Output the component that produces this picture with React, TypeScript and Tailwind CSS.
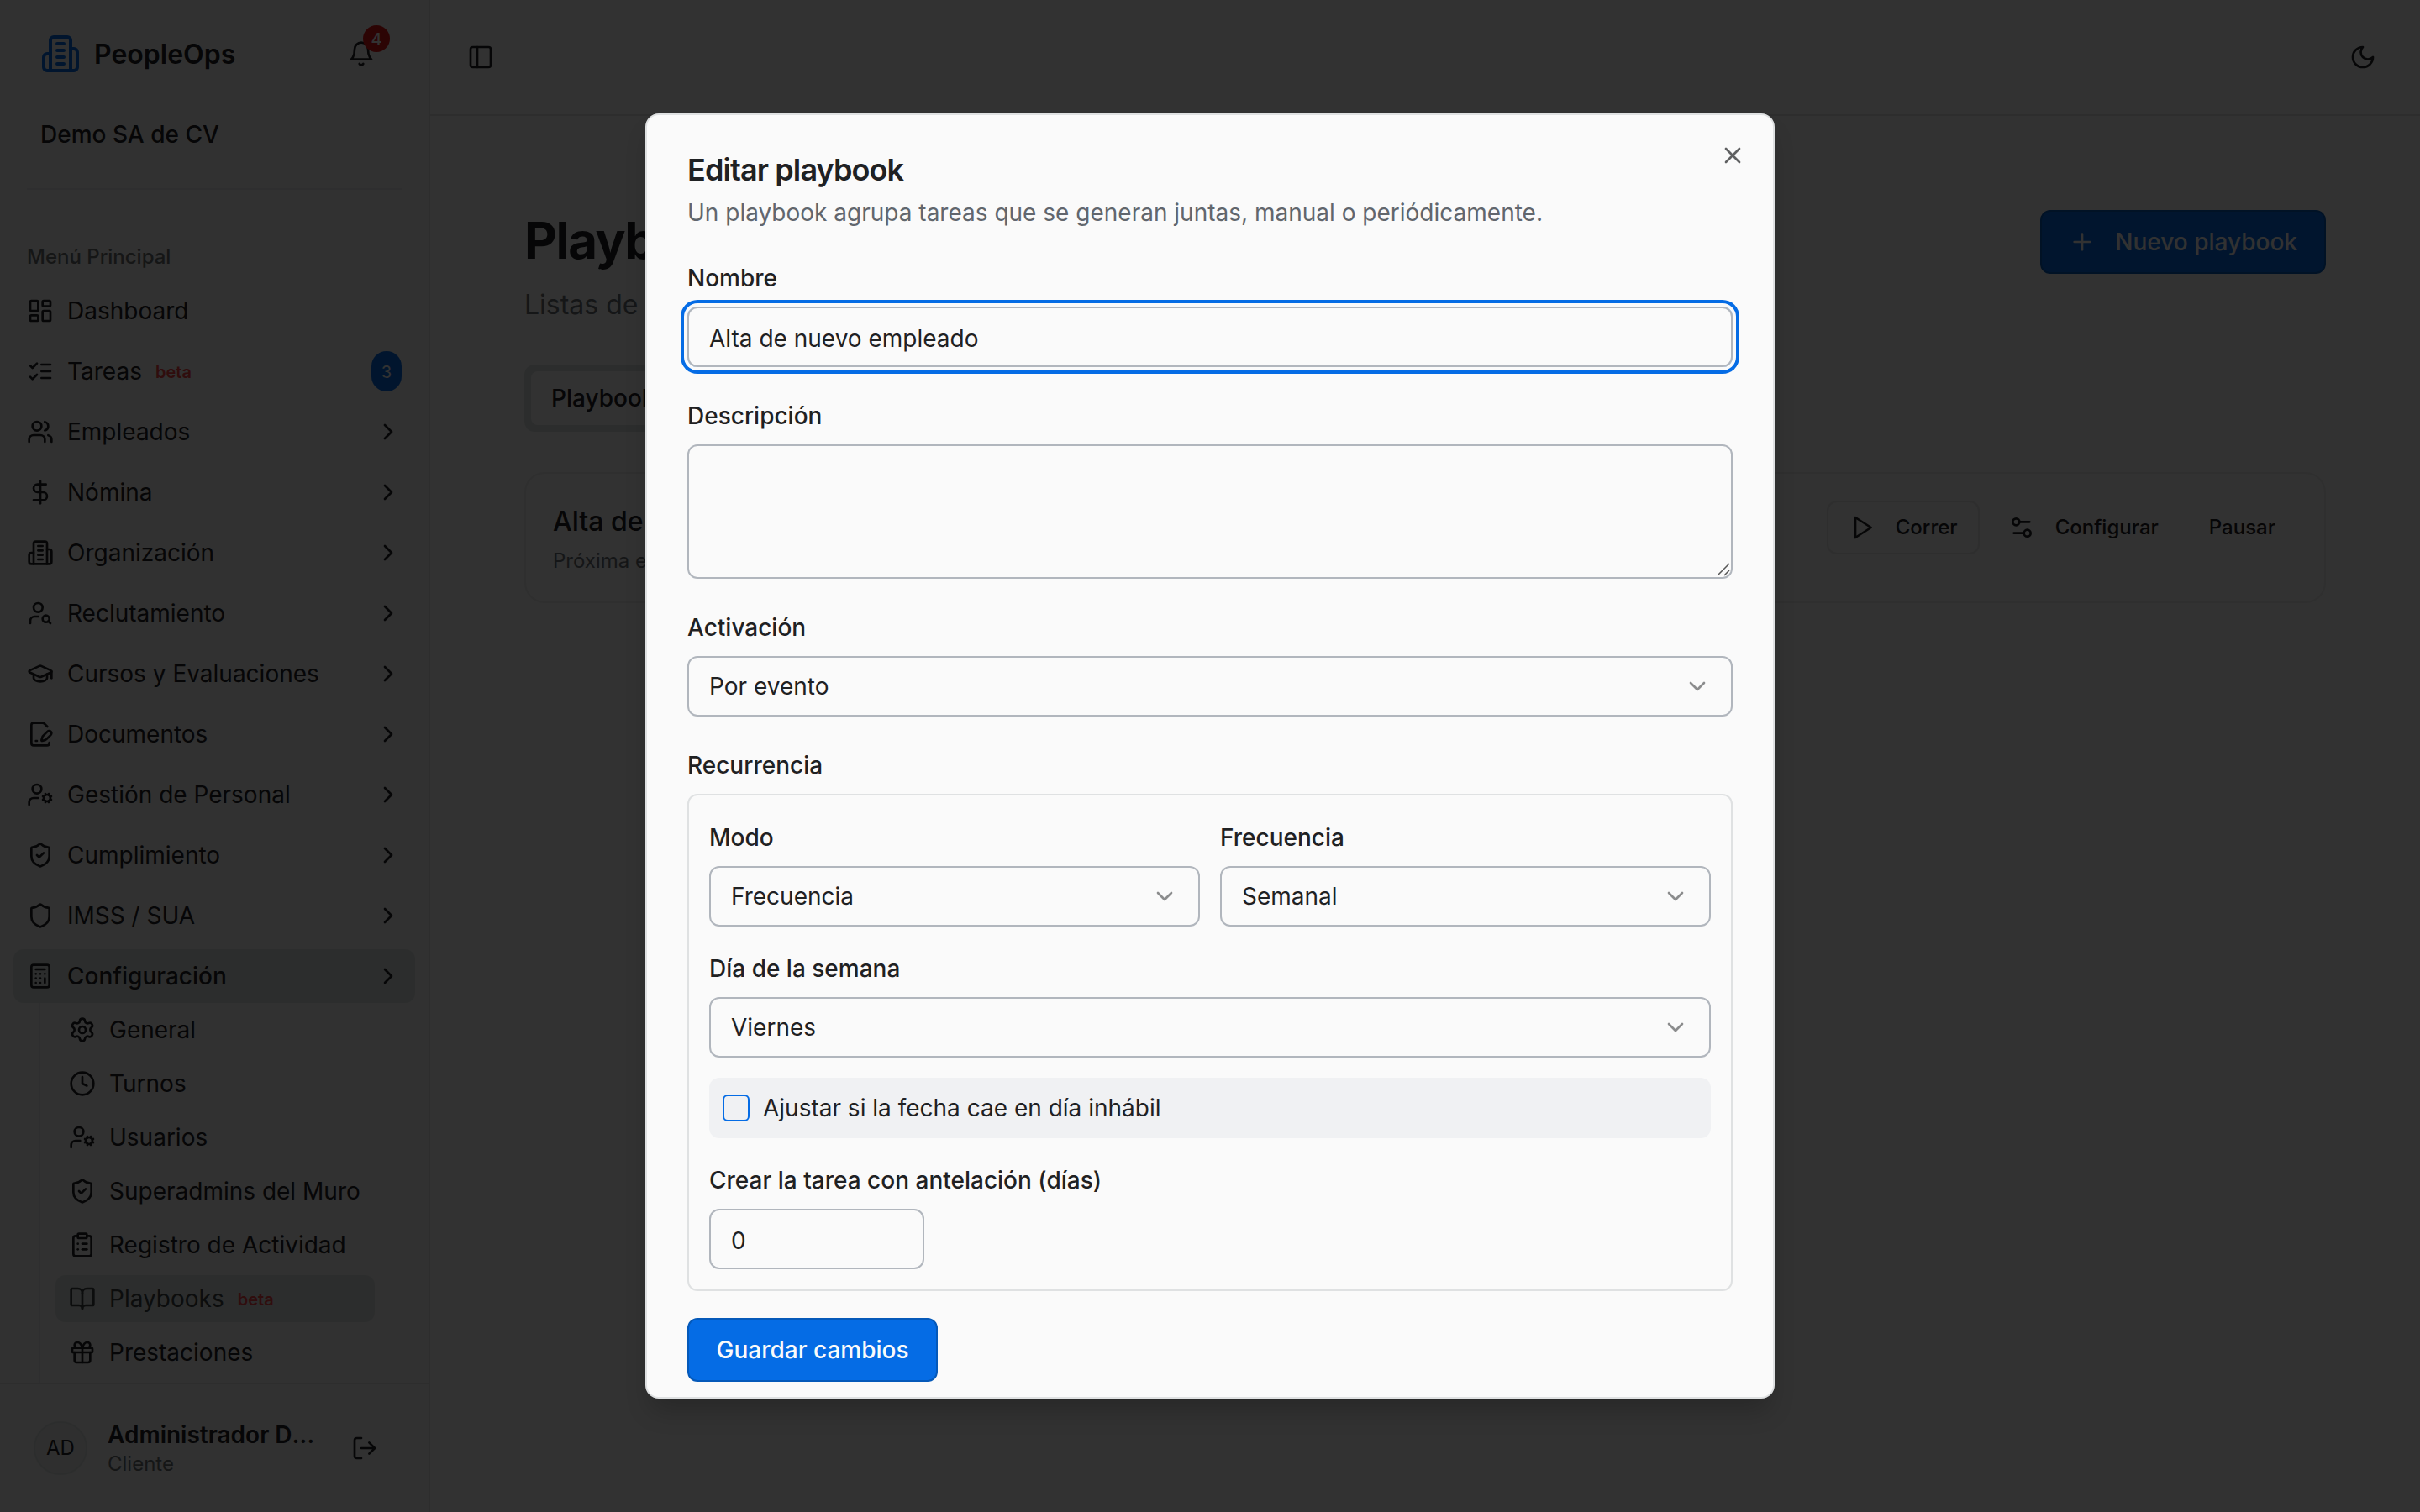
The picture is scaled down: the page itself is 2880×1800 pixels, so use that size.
import React from 'react';
import {
    BookOpen, Calculator, ChevronDown, ChevronRight, ClipboardList, Clock, DollarSign, FilePenLine, Gift,
    GraduationCap, LayoutDashboard, LogOut, PanelLeft, Plus, Settings, Settings2, Shield, ShieldCheck,
    UserCog, UserSearch, Users, X,
} from 'lucide-react';

interface IconProps {
    className?: string;
}

const Svg: React.FC<IconProps & { children: React.ReactNode }> = ({ className, children }) => (
    <svg className={className} viewBox="0 0 24 24" fill="none" stroke="currentColor" strokeWidth={2} strokeLinecap="round" strokeLinejoin="round">
        {children}
    </svg>
);

const BuildingIcon: React.FC<IconProps> = ({ className }) => (
    <Svg className={className}>
        <path d="M6 22V4a2 2 0 0 1 2-2h8a2 2 0 0 1 2 2v18Z" />
        <path d="M6 12H4a2 2 0 0 0-2 2v6a2 2 0 0 0 2 2h2" />
        <path d="M18 9h2a2 2 0 0 1 2 2v9a2 2 0 0 1-2 2h-2" />
        <path d="M10 6h4M10 10h4M10 14h4M10 18h4" />
    </Svg>
);

const TasksIcon: React.FC<IconProps> = ({ className }) => (
    <Svg className={className}>
        <path d="m3 17 2 2 4-4M3 7l2 2 4-4" />
        <path d="M13 6h8M13 12h8M13 18h8" />
    </Svg>
);

const BellIcon: React.FC<IconProps> = ({ className }) => (
    <Svg className={className}>
        <path d="M6 8a6 6 0 0 1 12 0c0 7 3 9 3 9H3s3-2 3-9" />
        <path d="M10.3 21a1.94 1.94 0 0 0 3.4 0" />
    </Svg>
);

const MoonIcon: React.FC<IconProps> = ({ className }) => (
    <Svg className={className}>
        <path d="M12 3a6 6 0 0 0 9 9 9 9 0 1 1-9-9Z" />
    </Svg>
);

const PlayIcon: React.FC<IconProps> = ({ className }) => (
    <Svg className={className}>
        <polygon points="6 3 20 12 6 21 6 3" />
    </Svg>
);

interface MenuItem {
    label: string;
    icon: React.ComponentType<any>;
    beta?: boolean;
    count?: number;
    active?: boolean;
}

const mainMenu: MenuItem[] = [
    { label: 'Dashboard', icon: LayoutDashboard },
    { label: 'Tareas', icon: TasksIcon, beta: true, count: 3 },
    { label: 'Empleados', icon: Users },
    { label: 'Nómina', icon: DollarSign },
    { label: 'Organización', icon: BuildingIcon },
    { label: 'Reclutamiento', icon: UserSearch },
    { label: 'Cursos y Evaluaciones', icon: GraduationCap },
    { label: 'Documentos', icon: FilePenLine },
    { label: 'Gestión de Personal', icon: UserCog },
    { label: 'Cumplimiento', icon: ShieldCheck },
    { label: 'IMSS / SUA', icon: Shield },
    { label: 'Configuración', icon: Calculator, active: true },
];

const configMenu: MenuItem[] = [
    { label: 'General', icon: Settings },
    { label: 'Turnos', icon: Clock },
    { label: 'Usuarios', icon: UserCog },
    { label: 'Superadmins del Muro', icon: ShieldCheck },
    { label: 'Registro de Actividad', icon: ClipboardList },
    { label: 'Playbooks', icon: BookOpen, beta: true, active: true },
    { label: 'Prestaciones', icon: Gift },
];

const Beta = () => <span className="pt-0.5 text-[20px] font-semibold text-[#ef4444]">beta</span>;

const Sidebar = () => (
    <aside className="flex h-full w-[512px] shrink-0 flex-col border-r-2 border-[#e0e1e2] bg-[#f2f2f2]">
        <div className="flex h-32 shrink-0 items-center px-12">
            <BuildingIcon className="size-12 text-[#056ce5]" />
            <span className="ml-4 pt-0.5 text-[32px] font-semibold">PeopleOps</span>
            <div className="relative mr-4 ml-auto">
                <BellIcon className="size-8" />
                <span className="absolute -top-[18px] left-[18px] flex size-8 items-center justify-center rounded-full bg-[#dc1414] pt-0.5 text-[20px] font-medium text-[#fafafa]">4</span>
            </div>
        </div>
        <div className="flex h-16 shrink-0 items-center px-12 text-[28px] font-medium">Demo SA de CV</div>
        <div className="mx-8 mt-8 h-0.5 shrink-0 bg-[#e6e7e8]" />
        <div className="mt-12 flex h-16 shrink-0 items-center px-8 text-[24px] font-medium text-[#6b6d70]">Menú Principal</div>
        <nav className="flex min-h-0 flex-1 flex-col overflow-hidden px-4">
            <ul className="flex shrink-0 flex-col gap-2">
                {mainMenu.map((item) => (
                    <li key={item.label} className={`flex h-16 items-center gap-4 rounded-xl px-4 ${item.active ? 'bg-[#dce2e0] font-medium' : ''}`}>
                        <item.icon className="size-8 shrink-0" />
                        <span>{item.label}</span>
                        {item.beta && <Beta />}
                        {item.count ? (
                            <span className="ml-auto flex h-12 w-9 items-center justify-center rounded-full bg-[#056ce5] pt-0.5 text-[20px] text-[#fafafa]">{item.count}</span>
                        ) : (
                            item.label !== 'Dashboard' && <ChevronRight className="ml-auto size-8" />
                        )}
                    </li>
                ))}
            </ul>
            <ul className="mr-7 ml-[30px] flex shrink-0 flex-col gap-2 border-l-2 border-[#e6e7e8] py-1 pr-5 pl-[18px]">
                {configMenu.map((item) => (
                    <li key={item.label} className={`flex h-14 items-center gap-4 rounded-xl px-4 ${item.active ? 'bg-[#dce2e0] text-[#3c4043]' : ''}`}>
                        <item.icon className="size-8 shrink-0" />
                        <span>{item.label}</span>
                        {item.beta && <Beta />}
                    </li>
                ))}
                <li className="h-14" />
            </ul>
        </nav>
        <div className="flex h-[154px] shrink-0 items-center border-t-2 border-[#e0e1e2] pr-[60px] pl-10">
            <div className="flex size-16 items-center justify-center rounded-full border-2 border-[#dde2e1] bg-[#e9eceb] text-[24px]">AD</div>
            <div className="ml-6 w-[254px] pt-0.5">
                <div className="truncate text-[28px] leading-9 font-semibold">Administrador Demo</div>
                <div className="text-[24px] leading-[34px] text-[#6b6d70]">Cliente</div>
            </div>
            <LogOut className="ml-auto size-8" />
        </div>
    </aside>
);

const Page = () => (
    <main className="flex-1 bg-[#fafafa]">
        <header className="flex h-[138px] items-center justify-between border-b-2 border-[#e0e1e2] px-11 pr-[52px]">
            <PanelLeft className="size-8" />
            <MoonIcon className="size-8" />
        </header>
        <div className="px-28 pt-28">
            <div className="flex items-start justify-between">
                <div>
                    <h1 className="text-[60px] leading-[72px] font-bold tracking-tight">Playbooks</h1>
                    <p className="mt-[17px] text-[32px] leading-[47px] text-[#6b7075]">Listas de tareas</p>
                </div>
                <button className="flex h-[76px] items-center gap-[23px] rounded-xl border-2 border-[#0559b9] bg-[#056ce5] px-8 font-medium text-[#fafafa]">
                    <Plus className="size-8" />
                    Nuevo playbook
                </button>
            </div>
            <div className="mt-12 inline-flex h-20 items-center rounded-xl bg-[#dce2e0] p-2">
                <span className="flex h-16 items-center rounded-lg bg-[#fafafa] px-6 font-medium">Playbooks</span>
            </div>
            <div className="mt-12 flex h-[156px] items-start justify-between rounded-3xl border-2 border-[#e8e9e9] bg-[#f7f7f7] p-8">
                <div>
                    <div className="pt-px text-[32px] leading-12 font-medium">Alta de nuevo empleado</div>
                    <div className="mt-[7px] text-[24px] leading-8 text-[#6b7075]">Próxima ejecución</div>
                </div>
                <div className="flex gap-2 text-[24px] font-medium">
                    <button className="flex h-16 items-center gap-6 rounded-xl border-2 border-[#e3e4e5] px-6">
                        <PlayIcon className="size-8" />
                        Correr
                    </button>
                    <button className="flex h-16 items-center gap-6 px-[26px]">
                        <Settings2 className="size-8" />
                        Configurar
                    </button>
                    <button className="h-16 px-[26px]">Pausar</button>
                </div>
            </div>
        </div>
    </main>
);

const Field: React.FC<{ label: string; children: React.ReactNode }> = ({ label, children }) => (
    <div className="flex flex-1 flex-col gap-2">
        <label className="flex h-[52px] items-center font-medium">{label}</label>
        {children}
    </div>
);

const SelectBox: React.FC<{ value: string }> = ({ value }) => (
    <button type="button" className="flex h-[72px] w-full items-center justify-between rounded-xl border-2 border-[#b1b6bd] px-6">
        <span>{value}</span>
        <ChevronDown className="size-8 opacity-50" />
    </button>
);

const EditDialog = () => (
    <div className="relative flex h-[1530px] w-[1344px] flex-col gap-8 overflow-hidden rounded-2xl border-2 border-[#dfe1e2] bg-[#fafafa] p-12 text-[#1f2123] shadow-[0_20px_30px_-6px_rgba(0,0,0,0.2)]">
        <X className="absolute top-8 right-8 size-8 opacity-70" />
        <div className="flex flex-col gap-3">
            <h2 className="-mt-px mb-px text-[36px] leading-none font-semibold tracking-tight">Editar playbook</h2>
            <p className="leading-10 text-[#61666d]">Un playbook agrupa tareas que se generan juntas, manual o periódicamente.</p>
        </div>
        <div className="flex flex-col gap-8">
            <Field label="Nombre">
                <input
                    defaultValue="Alta de nuevo empleado"
                    className="h-[72px] rounded-xl border-2 border-[#b1b6bd] px-6 pt-[3px] ring-4 ring-[#056ce5] ring-offset-4 ring-offset-[#fafafa] outline-none"
                />
            </Field>
            <Field label="Descripción">
                <div className="relative h-40">
                    <textarea className="block size-full resize-none rounded-xl border-2 border-[#b1b6bd] px-6 py-4" />
                    <svg className="absolute right-[3px] bottom-[3px] size-4 text-[#555]" viewBox="0 0 16 16" stroke="currentColor" strokeWidth={1.5}>
                        <path d="M1 15 15 1M9 15l6-6" />
                    </svg>
                </div>
            </Field>
            <Field label="Activación">
                <SelectBox value="Por evento" />
            </Field>
            <Field label="Recurrencia">
                <div className="flex flex-col gap-6 rounded-xl border-2 border-[#dfe1e2] p-6">
                    <div className="flex gap-6">
                        <Field label="Modo">
                            <SelectBox value="Frecuencia" />
                        </Field>
                        <Field label="Frecuencia">
                            <SelectBox value="Semanal" />
                        </Field>
                    </div>
                    <Field label="Día de la semana">
                        <SelectBox value="Viernes" />
                    </Field>
                    <label className="flex h-[72px] items-center gap-4 rounded-xl bg-[#f0f1f3] px-4">
                        <span className="size-8 rounded-md border-2 border-[#056ce5]" />
                        Ajustar si la fecha cae en día inhábil
                    </label>
                    <Field label="Crear la tarea con antelación (días)">
                        <input defaultValue="0" className="h-[72px] w-64 rounded-xl border-2 border-[#b1b6bd] px-6 pt-[3px]" />
                    </Field>
                </div>
            </Field>
            <button className="h-[76px] w-[298px] self-start rounded-xl border-2 border-[#0559b9] bg-[#056ce5] font-medium text-[#fafafa]">Guardar cambios</button>
        </div>
    </div>
);

const App = () => (
    <div className="relative h-[1800px] w-[2880px] overflow-hidden font-['Inter',sans-serif] text-[28px] text-[#1f2123]">
        <div className="flex h-full">
            <Sidebar />
            <Page />
        </div>
        <div className="absolute inset-0 flex items-center justify-center bg-black/80">
            <EditDialog />
        </div>
    </div>
);

export default App;
